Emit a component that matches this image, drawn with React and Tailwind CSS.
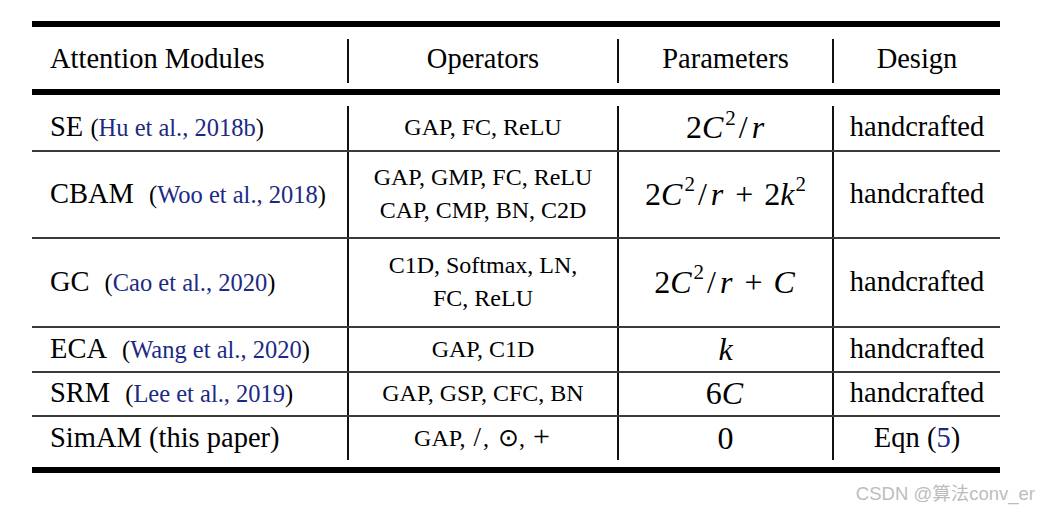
import React from "react";

const cite = "text-[#1c2a84]";

function Cite({ children }) {
  return (
    <span className="text-[24.5px]">
      (<span className={cite}>{children}</span>)
    </span>
  );
}

function C() {
  return <i className="pr-[2px]">C</i>;
}

function Sq() {
  return <sup className="text-[21px] top-[-0.45em]">2</sup>;
}

function Over() {
  return (
    <>
      2<C />
      <Sq />
      <span className="pl-[3px] pr-[4px]">/</span>
      <i className="pr-[1px]">r</i>
    </>
  );
}

function Plus() {
  return <span className="px-[11px]">+</span>;
}

const rows = [
  {
    h: "h-[44px]",
    name: (
      <span>
        SE <Cite>Hu et al., 2018b</Cite>
      </span>
    ),
    ops: ["GAP, FC, ReLU"],
    params: <Over />,
    design: "handcrafted",
  },
  {
    h: "h-[85px]",
    name: (
      <span>
        CBAM<span className="ml-[15px]"><Cite>Woo et al., 2018</Cite></span>
      </span>
    ),
    ops: ["GAP, GMP, FC, ReLU", "CAP, CMP, BN, C2D"],
    params: (
      <>
        <Over />
        <Plus />2<i className="pr-[1px]">k</i>
        <Sq />
      </>
    ),
    design: "handcrafted",
  },
  {
    h: "h-[87px]",
    name: (
      <span>
        GC<span className="ml-[15px]"><Cite>Cao et al., 2020</Cite></span>
      </span>
    ),
    ops: ["C1D, Softmax, LN,", "FC, ReLU"],
    params: (
      <>
        <Over />
        <Plus />
        <C />
      </>
    ),
    design: "handcrafted",
  },
  {
    h: "h-[43px]",
    name: (
      <span>
        ECA<span className="ml-[15px]"><Cite>Wang et al., 2020</Cite></span>
      </span>
    ),
    ops: ["GAP, C1D"],
    params: <i>k</i>,
    design: "handcrafted",
  },
  {
    h: "h-[42px]",
    name: (
      <span>
        SRM<span className="ml-[15px]"><Cite>Lee et al., 2019</Cite></span>
      </span>
    ),
    ops: ["GAP, GSP, CFC, BN"],
    params: (
      <>
        6<C />
      </>
    ),
    design: "handcrafted",
  },
  {
    h: "h-[43px]",
    name: <span>SimAM (this paper)</span>,
    ops: [
      <span key="s">
        GAP, <span className="text-[27px] px-[2px]">/</span>, <span className="text-[25px] pl-[3px]">{"\u2299"}</span>,{" "}
        <span className="text-[30px] leading-none px-[2px]">+</span>
      </span>,
    ],
    params: <>0</>,
    design: (
      <span>
        Eqn (<span className={cite}>5</span>)
      </span>
    ),
  },
];

function Thin() {
  return <div className="h-[2px] bg-[#3a3a3a]" />;
}

export default function App() {
  return (
    <div className="relative w-[1038px] h-[510px] bg-white text-black font-['Liberation_Serif','Times_New_Roman',serif]">
      <div className="ml-[32px] w-[968px] pt-[21px]">
        <div className="h-[6px] bg-black" />

        {/* header */}
        <div className="flex h-[62px] pt-[12px] text-[28.5px]">
          <div className="w-[315px] h-[44px] flex items-center pl-[18px] pb-[3px]">Attention Modules</div>
          <div className="w-[270px] h-[44px] flex items-center justify-center border-l-2 border-[#111] pb-[3px]">Operators</div>
          <div className="w-[215px] h-[44px] flex items-center justify-center border-l-2 border-[#111] pb-[3px]">Parameters</div>
          <div className="w-[168px] h-[44px] flex items-center justify-center border-l-2 border-[#111] pb-[3px]">Design</div>
        </div>

        <div className="h-[6px] bg-black" />
        <div className="h-[11px]" />

        {rows.map((r, i) => (
          <div key={i}>
            {i > 0 && <Thin />}
            <div className={`flex ${r.h}`}>
              <div className="w-[315px] flex items-center pl-[18px] pb-[1px] text-[28.5px] whitespace-nowrap">{r.name}</div>
              <div className="w-[270px] flex flex-col items-center justify-center border-l-2 border-[#111] text-[24px] leading-[33px] pb-[1px] whitespace-nowrap">
                {r.ops.map((o, j) => (
                  <div key={j}>{o}</div>
                ))}
              </div>
              <div className="w-[215px] flex items-center justify-center border-l-2 border-[#111] text-[32px] pb-[2px] whitespace-nowrap">{r.params}</div>
              <div className="w-[168px] flex items-center justify-center border-l-2 border-[#111] text-[28.5px] pb-[1px]">{r.design}</div>
            </div>
          </div>
        ))}

        <div className="h-[7px]" />
        <div className="h-[6px] bg-black" />
      </div>

      <div className="absolute right-[3px] top-[480px] text-[18.5px] text-[#bdbdbd] font-['Liberation_Sans','Noto_Sans_CJK_SC',sans-serif]">
        CSDN @算法conv_er
      </div>
    </div>
  );
}
